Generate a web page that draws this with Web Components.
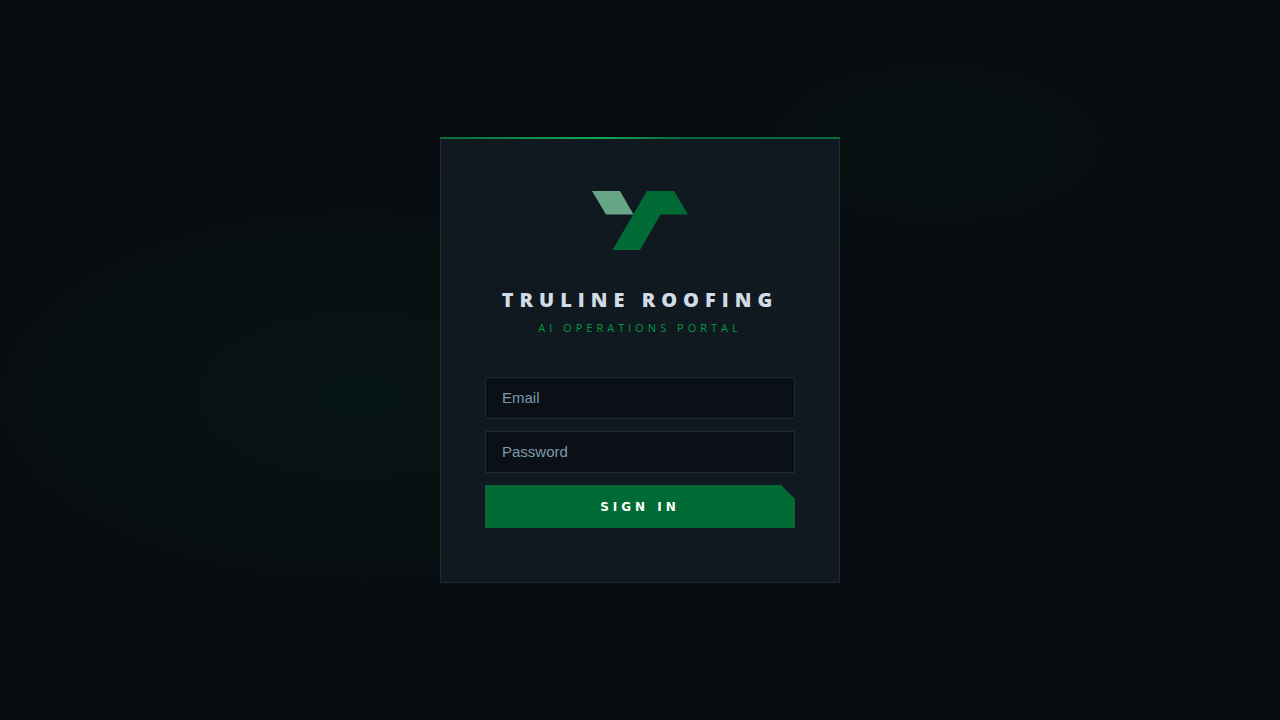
<!DOCTYPE html>
<html lang="en">
<head>
<meta charset="utf-8">
<meta name="viewport" content="width=device-width, initial-scale=1">
<title>TruLine Roofing</title>
<style>
    body {
        margin: 0;
        background: #070b0f;
    }
</style>
</head>
<body>
<login-page>
    <login-card>
        <brand-header>
            TRULINE ROOFING
            <span slot="tagline">AI OPERATIONS PORTAL</span>
        </brand-header>
        <login-form></login-form>
    </login-card>
</login-page>

<script>
const pageTemplate = document.createElement('template');
pageTemplate.innerHTML = `
<style>
    :host {
        display: flex;
        align-items: center;
        justify-content: center;
        min-height: 100vh;
        box-sizing: border-box;
        font-family: "Open Sans", "Noto Sans", sans-serif;
        color: #d0dce8;
        background:
            radial-gradient(ellipse 36% 33% at 28% 55%, rgba(0, 107, 53, .1), transparent),
            radial-gradient(ellipse 21% 18% at 73% 20%, rgba(0, 107, 53, .06), transparent),
            #070b0f;
    }
</style>
<slot></slot>
`;

class LoginPage extends HTMLElement {
    constructor() {
        super();
        this.attachShadow({ mode: 'open' }).appendChild(pageTemplate.content.cloneNode(true));
    }
}

const cardTemplate = document.createElement('template');
cardTemplate.innerHTML = `
<style>
    :host {
        display: block;
        position: relative;
        box-sizing: border-box;
        width: 100%;
        max-width: 400px;
        padding: 52px 44px 54px;
        background: #111920;
        border: 1px solid #1f2b38;
    }
    /* green strip over the top border */
    .accent {
        position: absolute;
        top: -1px;
        left: -1px;
        right: -1px;
        height: 2px;
        background: linear-gradient(90deg, #0b6b3a, #12a958 40%, #0b6b3a 60%);
    }
</style>
<div class="accent"></div>
<slot></slot>
`;

class LoginCard extends HTMLElement {
    constructor() {
        super();
        this.attachShadow({ mode: 'open' }).appendChild(cardTemplate.content.cloneNode(true));
    }
}

const brandTemplate = document.createElement('template');
brandTemplate.innerHTML = `
<style>
    :host {
        display: flex;
        flex-direction: column;
        align-items: center;
        text-align: center;
        margin-bottom: 41px;
    }
    svg {
        display: block;
        width: 96px;
        height: 60px;
        margin-bottom: 36px;
    }
    h1 {
        margin: 0 0 6px;
        font-size: 20px;
        line-height: 28px;
        font-weight: 800;
        letter-spacing: 6px;
        white-space: nowrap;
    }
    p {
        margin: 0;
        font-size: 11px;
        line-height: 16px;
        letter-spacing: 4px;
        color: #009a44;
    }
</style>
<svg viewBox="0 0 96 60" aria-hidden="true">
    <path d="M0 1H28L41.500 24.500H14Z" fill="#66a686"/>
    <path d="M55 1H82L96 24.500H68.500L48 60H20.500Z" fill="#006b35"/>
</svg>
<h1><slot></slot></h1>
<p><slot name="tagline"></slot></p>
`;

class BrandHeader extends HTMLElement {
    constructor() {
        super();
        this.attachShadow({ mode: 'open' }).appendChild(brandTemplate.content.cloneNode(true));
    }
}

const formTemplate = document.createElement('template');
formTemplate.innerHTML = `
<style>
    :host {
        display: block;
    }
    form {
        display: flex;
        flex-direction: column;
        gap: 12px;
    }
    input, button {
        box-sizing: border-box;
        width: 100%;
        margin: 0;
        border-radius: 0;
        font-family: "Liberation Sans", Arial, sans-serif;
        line-height: 16px;
    }
    input {
        display: block;
        height: 42px;
        padding: 11px 16px 13px;
        border: 1px solid #1c2b39;
        background: #0b1017;
        color: #d0dce8;
        font-size: 15px;
        outline: none;
    }
    input:focus {
        border-color: #006b35;
    }
    input::placeholder {
        color: #7a9aad;
        opacity: 1;
    }
    button {
        padding: 14px 16px 13px;
        border: 0;
        background: #006b35;
        color: #fff;
        font-family: "DejaVu Sans", "Liberation Sans", sans-serif;
        font-size: 12px;
        font-weight: 900;
        letter-spacing: 4px;
        cursor: pointer;
        clip-path: polygon(0 0, calc(100% - 14px) 0, 100% 14px, 100% 100%, 0 100%);
    }
    button:hover {
        background: #008542;
    }
</style>
<form>
    <input id="email" type="email" placeholder="Email" aria-label="Email" autocomplete="email">
    <input id="password" type="password" placeholder="Password" aria-label="Password" autocomplete="current-password">
    <button type="submit">SIGN IN</button>
</form>
`;

class LoginForm extends HTMLElement {
    constructor() {
        super();
        this.onSubmit = this.onSubmit.bind(this);
        this.attachShadow({ mode: 'open' }).appendChild(formTemplate.content.cloneNode(true));
    }

    connectedCallback() {
        this.shadowRoot.querySelector('form').addEventListener('submit', this.onSubmit);
    }

    onSubmit(event) {
        event.preventDefault();
        const email = this.shadowRoot.getElementById('email').value;
        this.dispatchEvent(new CustomEvent('sign-in', { bubbles: true, detail: { email } }));
    }
}

customElements.define('login-page', LoginPage);
customElements.define('login-card', LoginCard);
customElements.define('brand-header', BrandHeader);
customElements.define('login-form', LoginForm);
</script>
</body>
</html>
